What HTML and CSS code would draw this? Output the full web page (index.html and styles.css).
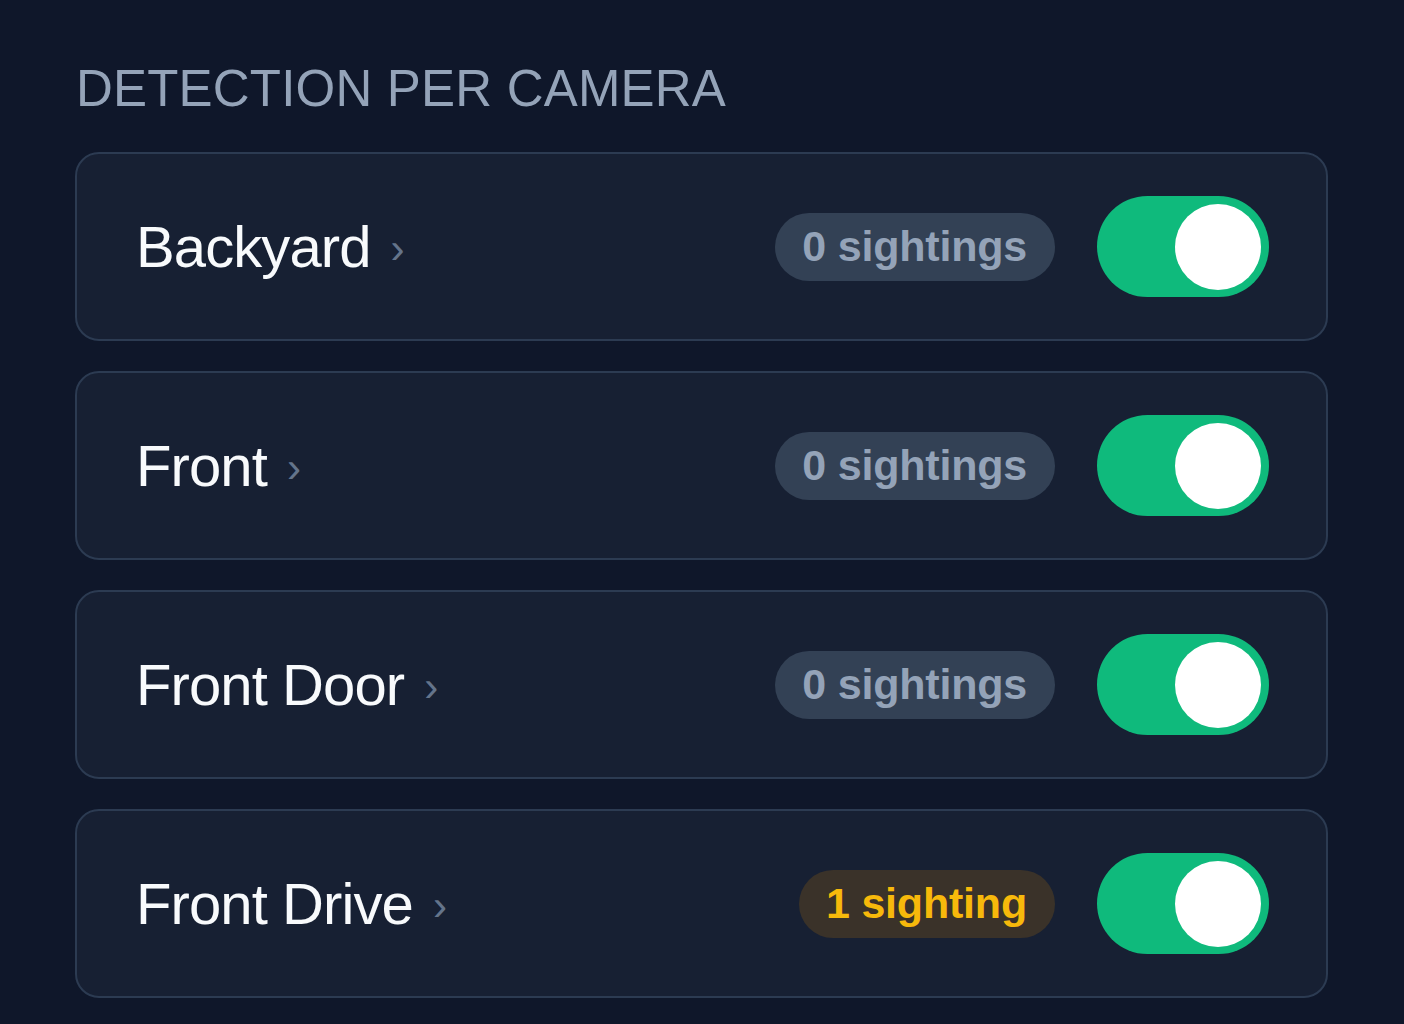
FILE: index.html
```html
<!DOCTYPE html>
<html lang="en">
<head>
<meta charset="utf-8">
<title>Detection per camera</title>
<link rel="stylesheet" href="styles.css">
</head>
<body>
<section class="panel">
  <h2 class="title">DETECTION PER CAMERA</h2>
  <div class="list">
    <div class="card">
      <span class="name">Backyard</span><span class="chev">›</span>
      <span class="badge">0 sightings</span>
      <span class="toggle on"><span class="knob"></span></span>
    </div>
    <div class="card">
      <span class="name">Front</span><span class="chev">›</span>
      <span class="badge">0 sightings</span>
      <span class="toggle on"><span class="knob"></span></span>
    </div>
    <div class="card">
      <span class="name">Front Door</span><span class="chev">›</span>
      <span class="badge">0 sightings</span>
      <span class="toggle on"><span class="knob"></span></span>
    </div>
    <div class="card">
      <span class="name">Front Drive</span><span class="chev">›</span>
      <span class="badge badge-amber">1 sighting</span>
      <span class="toggle on"><span class="knob"></span></span>
    </div>
  </div>
</section>
</body>
</html>
```
FILE: styles.css
```css
html, body {
  margin: 0;
  padding: 0;
  background: #0f172a;
  height: 100%;
}
body {
  font-family: "Liberation Sans", Arial, sans-serif;
  color: #f1f5f9;
}
.panel {
  padding: 59px 76px 0 75px;
}
.title {
  margin: 0 0 33px 1px;
  font-size: 51px;
  line-height: 60px;
  font-weight: 400;
  letter-spacing: 0.2px;
  color: #94a3b8;
}
.list {
  display: flex;
  flex-direction: column;
  gap: 30px;
}
.card {
  box-sizing: border-box;
  height: 189px;
  display: flex;
  align-items: center;
  padding: 0 57px 0 59px;
  background: #172033;
  border: 2px solid #2c3b52;
  border-radius: 24px;
}
.name {
  font-size: 58px;
  letter-spacing: -0.9px;
  color: #f8fafc;
  line-height: 1;
}
.chev {
  margin-left: 20px;
  font-size: 42px;
  color: #64748b;
  line-height: 1;
  position: relative;
  top: 2px;
}
.badge {
  margin-left: auto;
  height: 68px;
  display: inline-flex;
  align-items: center;
  padding: 0 28px 0 27px;
  border-radius: 34px;
  background: #334155;
  color: #94a3b8;
  font-size: 43px;
  font-weight: 700;
  letter-spacing: -0.2px;
}
.badge-amber {
  background: #3a3229;
  color: #f7b90b;
}
.toggle {
  margin-left: 42px;
  width: 172px;
  height: 101px;
  border-radius: 51px;
  background: #0fba7c;
  display: flex;
  align-items: center;
  justify-content: flex-end;
  padding-right: 8px;
  box-sizing: border-box;
  flex-shrink: 0;
}
.knob {
  width: 86px;
  height: 86px;
  border-radius: 50%;
  background: #ffffff;
}
```
